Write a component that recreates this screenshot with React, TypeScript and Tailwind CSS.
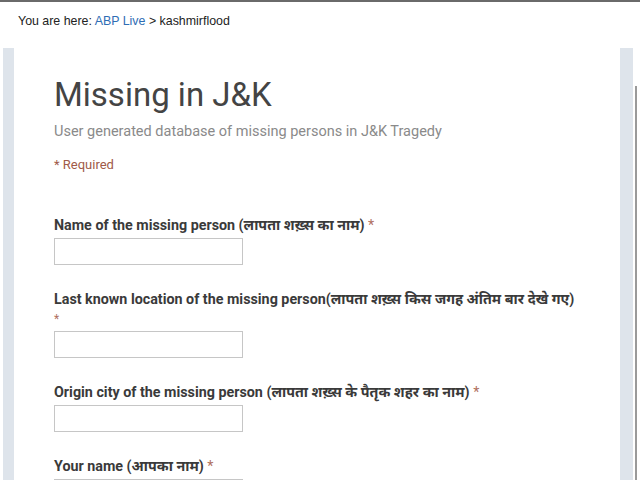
const FIELDS = [
  {
    label: "Name of the missing person (लापता शख़्स का नाम)",
    starBelow: false,
  },
  {
    label: "Last known location of the missing person(लापता शख़्स किस जगह अंतिम बार देखे गए)",
    starBelow: true,
  },
  {
    label: "Origin city of the missing person (लापता शख़्स के पैतृक शहर का नाम)",
    starBelow: false,
  },
  {
    label: "Your name (आपका नाम)",
    starBelow: false,
  },
];

function Field({ label, starBelow }: { label: string; starBelow: boolean }) {
  return (
    <div className="mb-[25px]">
      <div className="text-[14.3px] font-bold leading-[18px] text-[#3a3a3a]">
        {label}
        {!starBelow && <span className="font-normal text-[#b07060]"> *</span>}
      </div>
      {starBelow && (
        <div className="mt-[4px] text-[12px] leading-[14px] text-[#b07060]">*</div>
      )}
      <div
        className={`${starBelow ? "mt-[5px]" : "mt-[4px]"} h-[27px] w-[189px] border border-[#c6c6c6] bg-white`}
      />
    </div>
  );
}

export default function App() {
  return (
    <div
      className="relative h-[480px] w-[640px] overflow-hidden bg-white"
      style={{ fontFamily: "Roboto, 'Noto Sans', 'Liberation Sans', sans-serif" }}
    >
      <div className="h-[2px] bg-[#6a6a6a]" />
      <div className="h-[46px] pl-[18px] pt-[10px] font-['Liberation_Sans',sans-serif] text-[12.4px] text-[#222]">
        You are here: <span className="text-[#2e6db4]">ABP Live</span> &gt; kashmirflood
      </div>

      <div className="flex h-[432px]">
        <div className="ml-[3px] w-[11px] bg-[#dee4eb]" />
        <div className="flex-1 pl-[40px] pt-[28px]">
          <h1 className="text-[33px] leading-[38px] text-[#444]">Missing in J&amp;K</h1>
          <p className="mt-[9px] text-[14.5px] leading-[18px] text-[#8a8a8a]">
            User generated database of missing persons in J&amp;K Tragedy
          </p>
          <p className="mt-[16px] text-[13px] leading-[16px] text-[#a05a48]">* Required</p>
          <div className="mt-[43px]">
            {FIELDS.map((f) => (
              <Field key={f.label} label={f.label} starBelow={f.starBelow} />
            ))}
          </div>
        </div>
        <div className="w-[13px] bg-[#dee4eb]" />
        <div className="ml-[2px] mt-[38px] w-[2px] bg-[#9a9a9a]" />
        <div className="w-[3px]" />
      </div>
    </div>
  );
}
